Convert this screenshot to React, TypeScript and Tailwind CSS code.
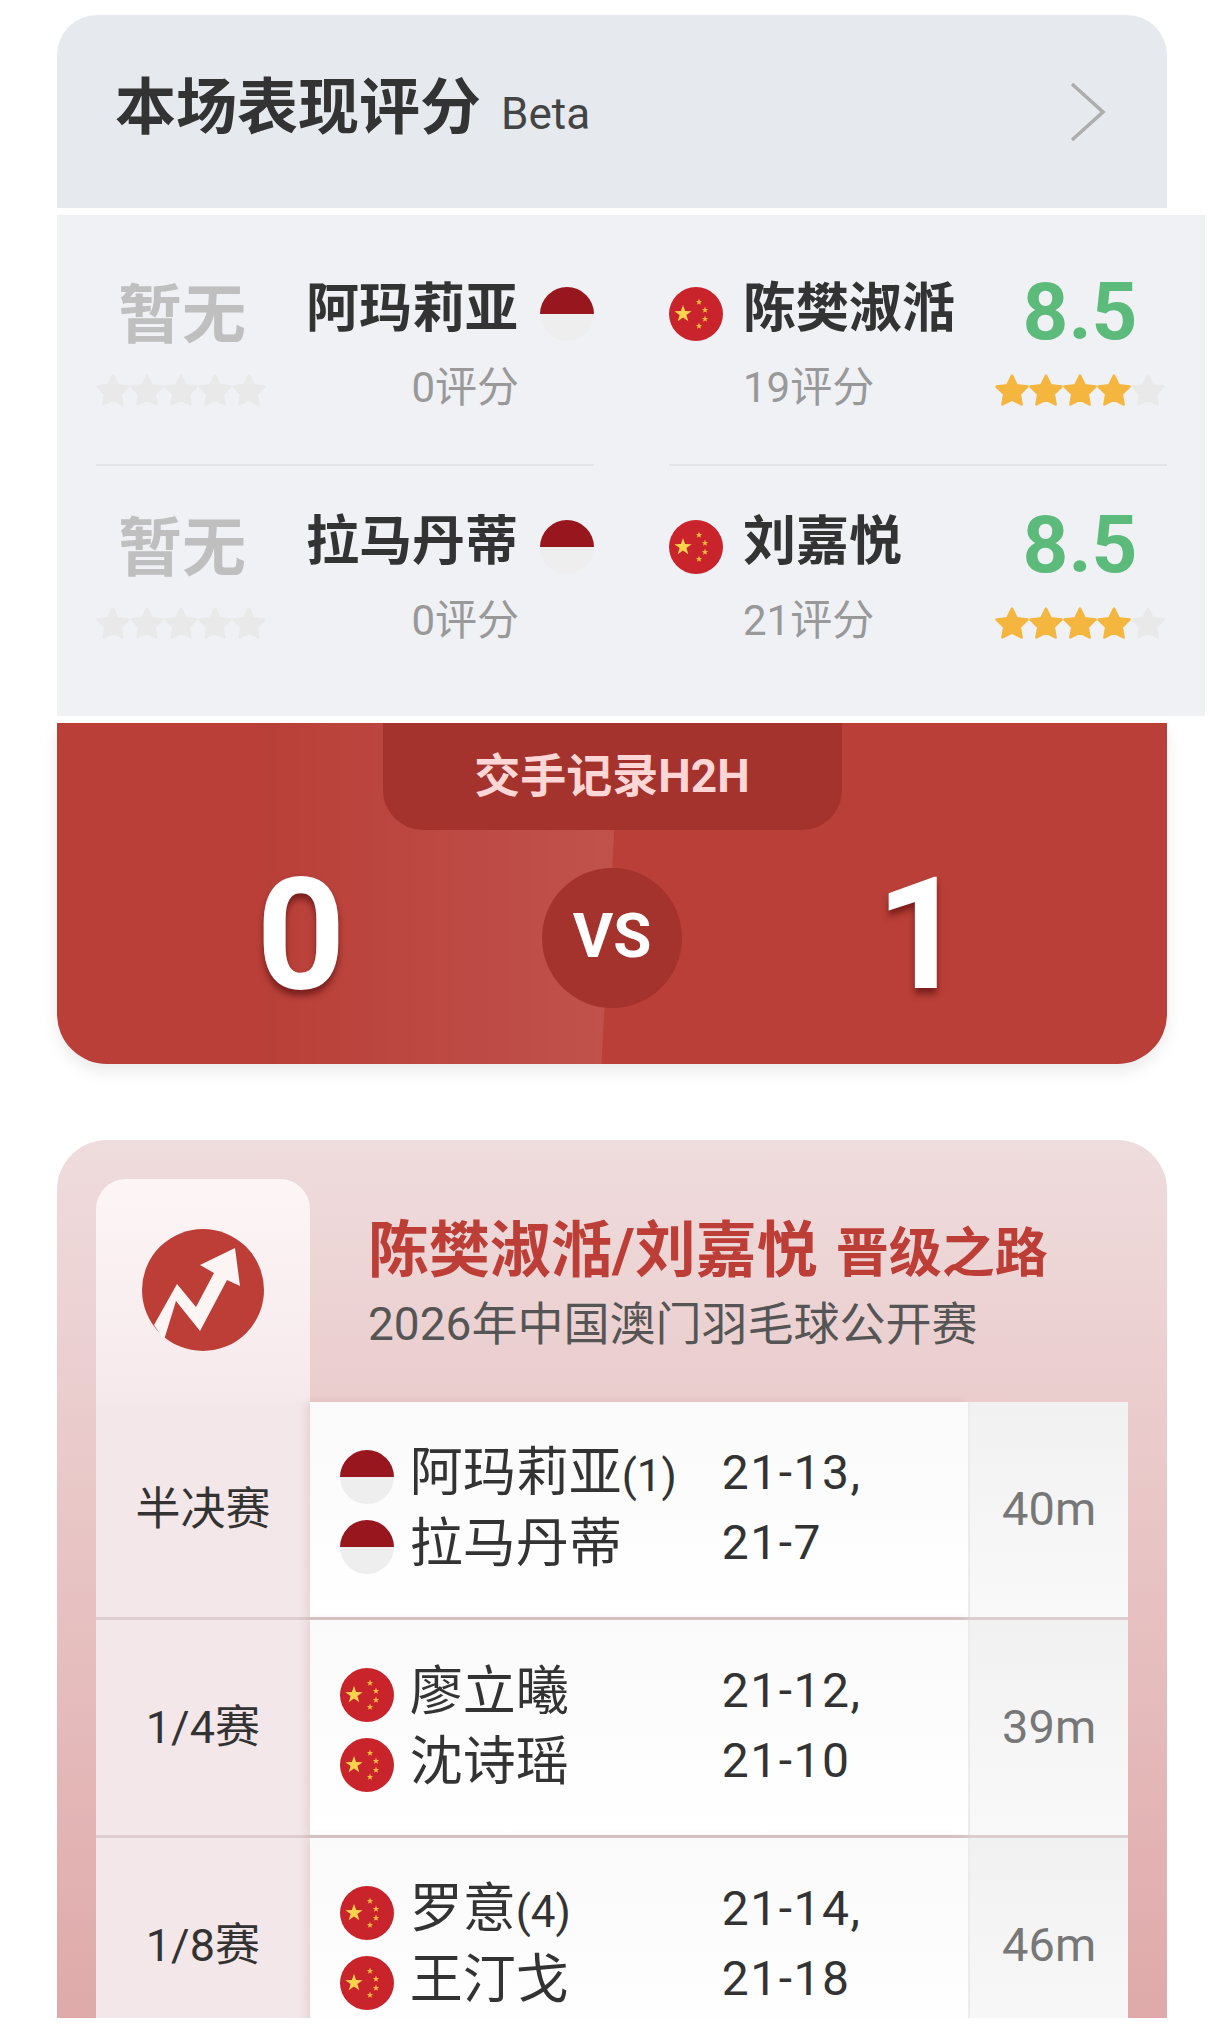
import React from 'react';

const FONT = 'font-["Roboto","Noto_Sans_CJK_SC",sans-serif]';

const starPoints = (cx: number, cy: number, r: number) =>
  Array.from({ length: 10 }, (_, i) => {
    const rad = i % 2 === 0 ? r : r * 0.4;
    const a = (Math.PI / 5) * i - Math.PI / 2;
    return `${(cx + rad * Math.cos(a)).toFixed(1)},${(cy + rad * Math.sin(a)).toFixed(1)}`;
  }).join(' ');

const ChinaFlag = () => (
  <svg width="54" height="54" viewBox="0 0 54 54" className="shrink-0">
    <circle cx="27" cy="27" r="27" fill="#c9242b" />
    <polygon points={starPoints(14, 27, 9)} fill="#fbd44e" />
    <polygon points={starPoints(30, 15, 3.4)} fill="#f5b942" />
    <polygon points={starPoints(36, 23, 3.4)} fill="#f5b942" />
    <polygon points={starPoints(36, 32, 3.4)} fill="#f5b942" />
    <polygon points={starPoints(30, 39, 3.4)} fill="#f5b942" />
  </svg>
);

const IndonesiaFlag = () => (
  <div className="w-[54px] h-[54px] shrink-0 rounded-full overflow-hidden flex flex-col">
    <div className="h-[27px] bg-[#98171f]" />
    <div className="h-[27px] bg-[#eeeeee]" />
  </div>
);

const Star = ({ on }: { on: boolean }) => (
  <svg width="34" height="32" viewBox="0 0 34 32">
    <polygon
      points="17,1.5 21.8,11.2 32.5,12.6 24.8,20.2 26.6,30.5 17,25.6 7.4,30.5 9.2,20.2 1.5,12.6 12.2,11.2"
      fill={on ? '#f4b63f' : '#e9e9e9'}
      stroke={on ? '#f4b63f' : '#e9e9e9'}
      strokeWidth="2.5"
      strokeLinejoin="round"
    />
  </svg>
);

const Stars = ({ count }: { count: number }) => (
  <div className="flex w-[172px]">
    {[0, 1, 2, 3, 4].map((i) => (
      <Star key={i} on={i < count} />
    ))}
  </div>
);

const RatingLeft = ({ name, last }: { name: string; last?: boolean }) => (
  <div className={`flex h-[233px] pt-[54px] ${last ? '' : 'border-b-2 border-[#e3e4e8]'}`}>
    <div className="w-[172px] flex flex-col items-center">
      <div className="mt-[-9px] text-[64px] leading-[76px] font-bold text-[#bfbfbf]">暂无</div>
      <div className="mt-[20px]"><Stars count={0} /></div>
    </div>
    <div className="ml-[38px] flex-1 flex flex-col">
      <div className="flex items-center justify-between h-[54px]">
        <span className="mt-[-10px] text-[53px] leading-[54px] font-bold text-[#333333]">{name}</span>
        <IndonesiaFlag />
      </div>
      <div className="mt-[21px] pr-[75px] text-right text-[42px] leading-[52px] text-[#999999]">0评分</div>
    </div>
  </div>
);

const RatingRight = ({ name, votes, last }: { name: string; votes: string; last?: boolean }) => (
  <div className={`flex h-[233px] pt-[54px] ${last ? '' : 'border-b-2 border-[#e3e4e8]'}`}>
    <div className="flex-1 flex flex-col">
      <div className="flex items-center gap-[20px] h-[54px]">
        <ChinaFlag />
        <span className="mt-[-10px] text-[53px] leading-[54px] font-bold text-[#333333]">{name}</span>
      </div>
      <div className="mt-[21px] pl-[74px] text-[42px] leading-[52px] text-[#999999]">{votes}</div>
    </div>
    <div className="w-[172px] flex flex-col items-center">
      <div className="mt-[-13px] ml-[-2px] text-[80px] leading-[76px] font-bold text-[#5cbb7b]">8.5</div>
      <div className="mt-[24px]"><Stars count={4} /></div>
    </div>
  </div>
);

const Player = ({ flag, name, seed }: { flag: 'cn' | 'id'; name: string; seed?: string }) => (
  <div className="flex items-center gap-[16px] h-[54px]">
    {flag === 'cn' ? <ChinaFlag /> : <IndonesiaFlag />}
    <span className="mt-[-6px] text-[53px] leading-[54px] text-[#333333] whitespace-nowrap">
      {name}
      {seed && <span className="text-[44px]">{seed}</span>}
    </span>
  </div>
);

const matches = [
  { stage: '半决赛', flag: 'id' as const, a: '阿玛莉亚', aSeed: '(1)', b: '拉马丹蒂', bSeed: '', s1: '21-13,', s2: '21-7', time: '40m' },
  { stage: '1/4赛', flag: 'cn' as const, a: '廖立曦', aSeed: '', b: '沈诗瑶', bSeed: '', s1: '21-12,', s2: '21-10', time: '39m' },
  { stage: '1/8赛', flag: 'cn' as const, a: '罗意', aSeed: '(4)', b: '王汀戈', bSeed: '', s1: '21-14,', s2: '21-18', time: '46m' },
];

const MatchRow = ({ m }: { m: (typeof matches)[0] }) => (
  <div className="flex h-[218px] border-b-[3px] border-[#ddcdce] shrink-0">
    <div className="w-[214px] flex items-center justify-center bg-[#f4e7e9] text-[45px] text-[#333333]">{m.stage}</div>
    <div className="w-[659px] flex bg-gradient-to-b from-[#fafafa] to-[#ffffff] shadow-[-4px_0_8px_rgba(120,70,70,0.12)] pl-[30px] pt-[48px]">
      <div className="w-[382px] flex flex-col gap-[16px]">
        <Player flag={m.flag} name={m.a} seed={m.aSeed} />
        <Player flag={m.flag} name={m.b} seed={m.bSeed} />
      </div>
      <div className="mt-[-4px] flex flex-col gap-[16px] text-[48px] tracking-[1.5px] text-[#333333]">
        <div className="h-[54px] leading-[54px]">{m.s1}</div>
        <div className="h-[54px] leading-[54px]">{m.s2}</div>
      </div>
    </div>
    <div className="w-[160px] flex items-center justify-center bg-gradient-to-b from-[#f1f1f1] to-[#f9f9f9] border-l-2 border-[#ececec] text-[47px] text-[#777777]">{m.time}</div>
  </div>
);

export default function App() {
  return (
    <div className={`${FONT} w-[1224px] h-[2034px] bg-white overflow-hidden px-[57px] pt-[15px]`}>
      <div className="h-[193px] bg-[#e6e9ee] rounded-t-[40px] flex items-center justify-between pl-[58px] pr-[61px]">
        <div className="flex items-baseline gap-[20px] mt-[-5px]">
          <span className="text-[61px] font-bold text-[#333333]">本场表现评分</span>
          <span className="text-[44px] text-[#444444]">Beta</span>
        </div>
        <svg width="36" height="60" viewBox="0 0 36 60" fill="none">
          <path d="M2 2L33 30L2 58" stroke="#adadad" strokeWidth="3.5" />
        </svg>
      </div>

      <div className="mt-[7px] mr-[-38px] h-[501px] bg-[#f0f1f5] pl-[39px] pr-[38px] pt-[18px] grid grid-cols-[498px_498px] gap-x-[75px] content-start">
        <RatingLeft name="阿玛莉亚" />
        <RatingRight name="陈樊淑湉" votes="19评分" />
        <RatingLeft name="拉马丹蒂" last />
        <RatingRight name="刘嘉悦" votes="21评分" last />
      </div>

      <div className="relative mt-[7px] h-[341px] bg-[#b93f38] rounded-b-[50px] shadow-[0_8px_16px_rgba(0,0,0,0.08)] overflow-hidden flex flex-col items-center">
        <div className="absolute inset-y-0 left-[193px] w-[370px] bg-gradient-to-r from-transparent to-white/10 [clip-path:polygon(0_0,100%_0,95%_100%,0_100%)]" />
        <div className="relative w-[459px] h-[107px] bg-[#a4332e] rounded-b-[40px] flex items-center justify-center text-[46px] font-bold text-[#ffd6d6]">
          交手记录H2H
        </div>
        <div className="relative mt-[38px] w-full grid grid-cols-[1fr_140px_1fr] items-center text-white font-bold">
          <div className="mt-[-6px] pl-[3px] text-center text-[155px] leading-[140px] [text-shadow:0_6px_6px_rgba(80,10,10,0.6)]">0</div>
          <div className="w-[140px] h-[140px] rounded-full bg-[#a4332e] flex items-center justify-center text-[62px] pb-[6px]">VS</div>
          <div className="mt-[-6px] pr-[8px] text-center text-[155px] leading-[140px] [text-shadow:0_6px_6px_rgba(80,10,10,0.6)]">1</div>
        </div>
      </div>

      <div className="mt-[76px] h-[878px] rounded-t-[50px] bg-gradient-to-b from-[#efdcdd] to-[#dfa9a9] pt-[39px] px-[39px] overflow-hidden">
        <div className="flex h-[223px]">
          <div className="w-[214px] rounded-t-[30px] bg-gradient-to-b from-[#fdf5f6] to-[#f6e9eb] flex justify-center pt-[50px]">
            <svg width="122" height="122" viewBox="0 0 122 122">
              <circle cx="61" cy="61" r="61" fill="#bd3e37" />
              <polygon points="12,96 35,55 54,78 72,44 58,36 93,19 98,57 85,51 58,102 34,72 22,111" fill="#fdf4f4" />
            </svg>
          </div>
          <div className="pl-[58px] pt-[34px]">
            <div className="flex items-baseline gap-[18px] font-bold text-[#bd3e37] leading-[76px]">
              <span className="text-[61px]">陈樊淑湉/刘嘉悦</span>
              <span className="text-[53px]">晋级之路</span>
            </div>
            <div className="mt-[4px] text-[46px] leading-[56px] text-[#555555]">2026年中国澳门羽毛球公开赛</div>
          </div>
        </div>
        <div className="flex flex-col">
          {matches.map((m) => (
            <MatchRow key={m.stage} m={m} />
          ))}
        </div>
      </div>
    </div>
  );
}
